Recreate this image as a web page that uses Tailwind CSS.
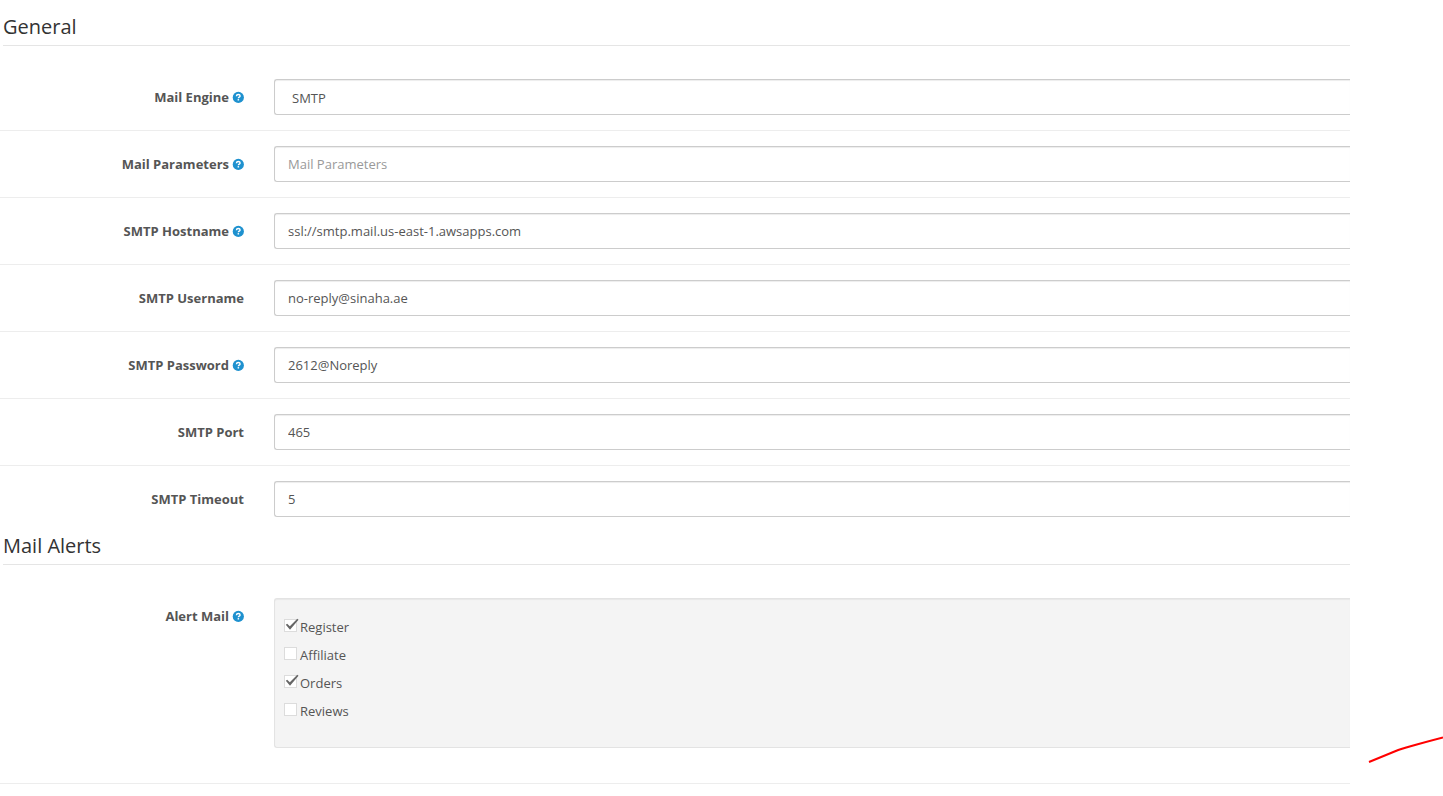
<!DOCTYPE html>
<html lang="en">
<head>
<meta charset="utf-8">
<meta name="viewport" content="width=device-width, initial-scale=1">
<title>Mail settings</title>
<script src="https://cdn.jsdelivr.net/npm/@tailwindcss/browser@4"></script>
</head>
<body class="bg-white font-['Open_Sans',sans-serif] text-[13px] leading-5 text-[#555]">
<svg class="hidden" aria-hidden="true">
  <symbol id="help" viewBox="0 0 12 12">
    <circle cx="6.300" cy="6.400" r="5.600" fill="#1e91cf"/>
    <path d="M4.400 5.200C4.500 4 5.300 3.500 6.300 3.500c1.100 0 1.800.6 1.800 1.400 0 1.300-1.700 1.200-1.700 2.300" fill="none" stroke="#fff" stroke-width="1.400"/>
    <path d="M5.600 8.100h1.500v1.400H5.600z" fill="#fff"/>
  </symbol>
</svg>
<form class="mr-[93px] pt-[13px]">
  <section aria-labelledby="general">
    <h2 id="general" class="ml-[3px] border-b border-[#e5e5e5] pb-1 text-[20px] leading-7 text-[#333]">General</h2>
    <div class="mt-[18px] divide-y divide-[#ededed]">
      <div class="flex py-[15px]">
        <label for="engine" class="flex h-9 w-[244px] shrink-0 items-center justify-end gap-[3px] font-bold">Mail Engine <svg class="size-3 overflow-visible"><use href="#help"/></svg></label>
        <select id="engine" class="ml-[30px] h-9 min-w-0 flex-1 appearance-none rounded-l-[3px] border border-r-0 border-[#ccc] bg-white pt-0.5 pl-[17px] shadow-[inset_0_1px_1px_rgba(0,0,0,0.075)]"><option>SMTP</option></select>
      </div>
      <div class="flex py-[15px]">
        <label for="params" class="flex h-9 w-[244px] shrink-0 items-center justify-end gap-[3px] font-bold">Mail Parameters <svg class="size-3 overflow-visible"><use href="#help"/></svg></label>
        <input id="params" type="text" placeholder="Mail Parameters" class="ml-[30px] h-9 min-w-0 flex-1 rounded-l-[3px] border border-r-0 border-[#ccc] px-[13px] shadow-[inset_0_1px_1px_rgba(0,0,0,0.075)] placeholder:text-[#999]">
      </div>
      <div class="flex py-[15px]">
        <label for="host" class="flex h-9 w-[244px] shrink-0 items-center justify-end gap-[3px] font-bold">SMTP Hostname <svg class="size-3 overflow-visible"><use href="#help"/></svg></label>
        <input id="host" type="text" value="ssl://smtp.mail.us-east-1.awsapps.com" class="ml-[30px] h-9 min-w-0 flex-1 rounded-l-[3px] border border-r-0 border-[#ccc] px-[13px] shadow-[inset_0_1px_1px_rgba(0,0,0,0.075)]">
      </div>
      <div class="flex py-[15px]">
        <label for="user" class="flex h-9 w-[244px] shrink-0 items-center justify-end font-bold">SMTP Username</label>
        <input id="user" type="text" value="no-reply@sinaha.ae" class="ml-[30px] h-9 min-w-0 flex-1 rounded-l-[3px] border border-r-0 border-[#ccc] px-[13px] shadow-[inset_0_1px_1px_rgba(0,0,0,0.075)]">
      </div>
      <div class="flex py-[15px]">
        <label for="pass" class="flex h-9 w-[244px] shrink-0 items-center justify-end gap-[3px] font-bold">SMTP Password <svg class="size-3 overflow-visible"><use href="#help"/></svg></label>
        <input id="pass" type="text" value="2612@Noreply" class="ml-[30px] h-9 min-w-0 flex-1 rounded-l-[3px] border border-r-0 border-[#ccc] px-[13px] shadow-[inset_0_1px_1px_rgba(0,0,0,0.075)]">
      </div>
      <div class="flex py-[15px]">
        <label for="port" class="flex h-9 w-[244px] shrink-0 items-center justify-end font-bold">SMTP Port</label>
        <input id="port" type="text" value="465" class="ml-[30px] h-9 min-w-0 flex-1 rounded-l-[3px] border border-r-0 border-[#ccc] px-[13px] shadow-[inset_0_1px_1px_rgba(0,0,0,0.075)]">
      </div>
      <div class="flex py-[15px]">
        <label for="timeout" class="flex h-9 w-[244px] shrink-0 items-center justify-end font-bold">SMTP Timeout</label>
        <input id="timeout" type="text" value="5" class="ml-[30px] h-9 min-w-0 flex-1 rounded-l-[3px] border border-r-0 border-[#ccc] px-[13px] shadow-[inset_0_1px_1px_rgba(0,0,0,0.075)]">
      </div>
    </div>
  </section>
  <section aria-labelledby="alerts">
    <h2 id="alerts" class="ml-[3px] border-b border-[#e5e5e5] pb-1 text-[20px] leading-7 text-[#333]">Mail Alerts</h2>
    <div class="mt-[18px] flex border-b border-[#ededed] pt-[15px] pb-[35px]" role="group" aria-labelledby="alert-mail">
      <div id="alert-mail" class="flex h-9 w-[244px] shrink-0 items-center justify-end gap-[3px] font-bold">Alert Mail <svg class="size-3 overflow-visible"><use href="#help"/></svg></div>
      <div class="ml-[30px] flex-1 rounded-l-[3px] border border-r-0 border-[#e3e3e3] bg-[#f4f4f4] pt-[14px] pb-[22px] pl-[9px] shadow-[inset_0_1px_1px_rgba(0,0,0,0.05)]">
        <label class="flex h-7 items-center gap-[3px]"><span class="relative -mt-1 size-[13px]"><input type="checkbox" checked class="peer block size-[13px] appearance-none border border-[#dcdcdc] bg-white"><svg class="pointer-events-none absolute top-0 left-0 hidden overflow-visible peer-checked:block" width="15" height="13" viewBox="0 0 15 13"><path d="M1.800 5.800 3.200 4.800 5.800 7.300 13.300-.2 14.500.7 6 10.800z" fill="#666"/></svg></span>Register</label>
        <label class="flex h-7 items-center gap-[3px]"><span class="relative -mt-1 size-[13px]"><input type="checkbox" class="block size-[13px] appearance-none border border-[#dcdcdc] bg-white"></span>Affiliate</label>
        <label class="flex h-7 items-center gap-[3px]"><span class="relative -mt-1 size-[13px]"><input type="checkbox" checked class="peer block size-[13px] appearance-none border border-[#dcdcdc] bg-white"><svg class="pointer-events-none absolute top-0 left-0 hidden overflow-visible peer-checked:block" width="15" height="13" viewBox="0 0 15 13"><path d="M1.800 5.800 3.200 4.800 5.800 7.300 13.300-.2 14.500.7 6 10.800z" fill="#666"/></svg></span>Orders</label>
        <label class="flex h-7 items-center gap-[3px]"><span class="relative -mt-1 size-[13px]"><input type="checkbox" class="block size-[13px] appearance-none border border-[#dcdcdc] bg-white"></span>Reviews</label>
      </div>
    </div>
  </section>
</form>
<!-- Freehand annotation stroke over the page margin -->
<svg class="pointer-events-none absolute top-[734px] right-0" width="76" height="30" viewBox="0 0 76 30" aria-hidden="true"><path d="M2 28 30 16.500Q36 14 76 3.500" fill="none" stroke="#f00" stroke-width="2"/></svg>
</body>
</html>
